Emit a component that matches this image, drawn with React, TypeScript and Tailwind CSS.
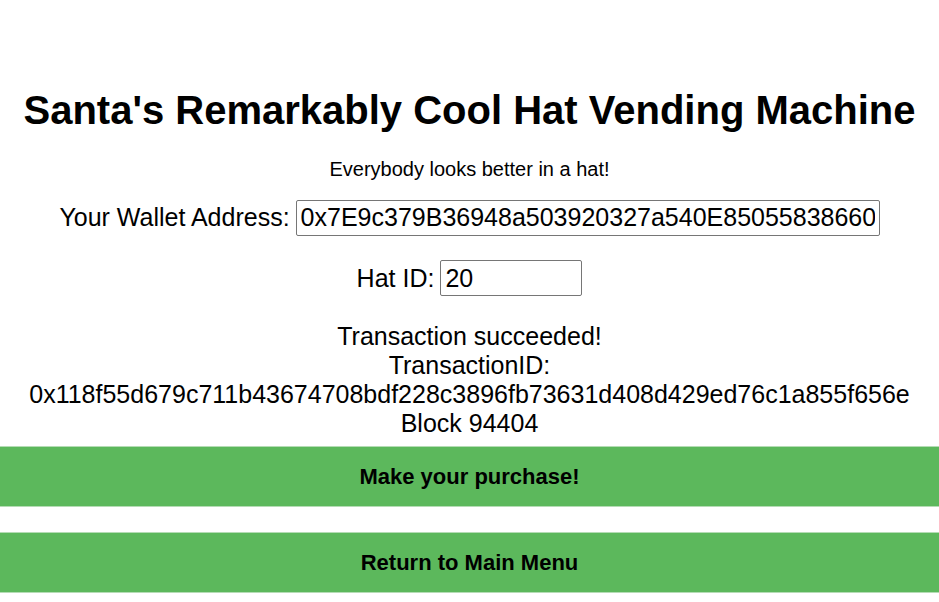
import React from "react";

export default function App() {
  return (
    <div className="min-h-screen bg-white text-black text-center" style={{ fontFamily: "'Liberation Sans', Arial, sans-serif" }}>
      <div className="pt-[87px]">
        <h1 className="text-[40px] font-bold leading-[46px]">Santa's Remarkably Cool Hat Vending Machine</h1>
        <p className="mt-[25px] text-[20px] leading-[23px]">Everybody looks better in a hat!</p>

        <div className="mt-[18px] flex items-center justify-center gap-[6px] text-[25px]">
          <label>Your Wallet Address:</label>
          <input
            readOnly
            value="0x7E9c379B36948a503920327a540E85055838660"
            className="w-[584px] h-[36px] px-[4px] border border-[#767676] rounded-[2px] text-[25px] outline-none"
          />
        </div>

        <div className="mt-[23px] flex items-center justify-center gap-[6px] text-[25px]">
          <label>Hat ID:</label>
          <input
            readOnly
            value="20"
            className="w-[142px] h-[36px] px-[4px] border border-[#767676] rounded-[2px] text-[25px] outline-none"
          />
        </div>

        <div className="mt-[25px] text-[25px] leading-[29px]">
          <div>Transaction succeeded!</div>
          <div>TransactionID:</div>
          <div>0x118f55d679c711b43674708bdf228c3896fb73631d408d429ed76c1a855f656e</div>
          <div>Block 94404</div>
        </div>

        <div className="mt-[8px] flex flex-col gap-[25px]">
          <button className="w-full h-[61px] bg-[#5cb85c] border-y border-[#b5dcb5] text-[22px] font-bold text-black">
            Make your purchase!
          </button>
          <button className="w-full h-[61px] bg-[#5cb85c] border-y border-[#b5dcb5] text-[22px] font-bold text-black">
            Return to Main Menu
          </button>
        </div>
      </div>
    </div>
  );
}
